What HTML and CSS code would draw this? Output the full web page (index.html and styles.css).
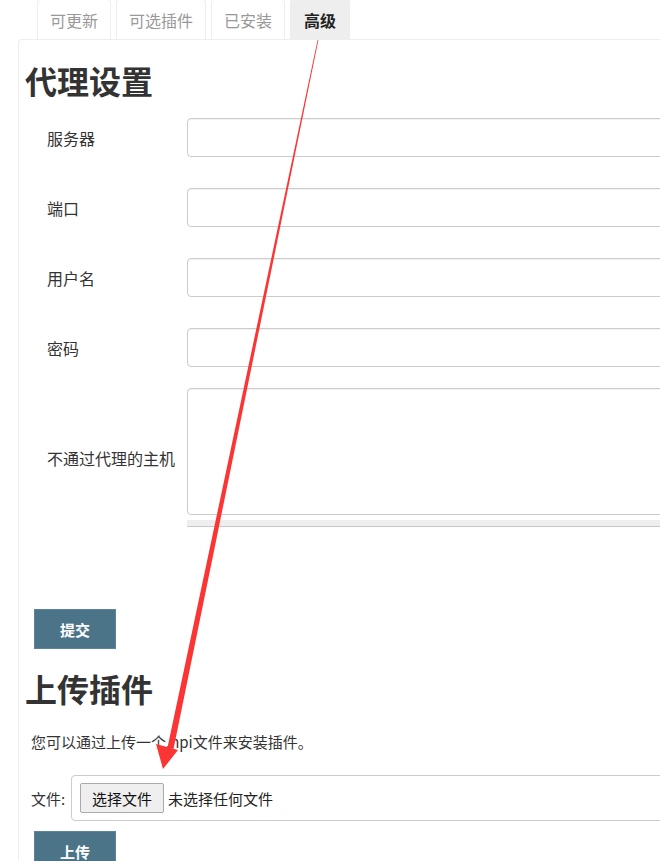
FILE: index.html
```html
<!DOCTYPE html>
<html>

<head>
    <meta charset="UTF-8">
    <title>插件管理</title>
    <link rel="stylesheet" href="styles.css">
</head>

<body>
    <ul class="tabs">
        <li class="tab">可更新</li>
        <li class="tab">可选插件</li>
        <li class="tab">已安装</li>
        <li class="tab active">高级</li>
    </ul>
    <div class="panel">
        <!--代理设置-->
        <h1 class="section-title">代理设置</h1>
        <div class="form">
            <div class="row">
                <label class="label">服务器</label>
                <input class="field" type="text">
            </div>
            <div class="row">
                <label class="label">端口</label>
                <input class="field" type="text">
            </div>
            <div class="row">
                <label class="label">用户名</label>
                <input class="field" type="text">
            </div>
            <div class="row row-last">
                <label class="label">密码</label>
                <input class="field" type="password">
            </div>
            <div class="row row-area">
                <label class="label">不通过代理的主机</label>
                <div class="area-wrap">
                    <textarea class="field area"></textarea>
                    <div class="area-bar"></div>
                </div>
            </div>
        </div>
        <button class="btn-submit">提交</button>

        <!--上传插件-->
        <h1 class="section-title upload-title">上传插件</h1>
        <p class="hint">您可以通过上传一个.hpi文件来安装插件。</p>
        <div class="file-row">
            <span class="file-label">文件:</span>
            <div class="file-box">
                <button class="file-btn">选择文件</button>
                <span class="file-name">未选择任何文件</span>
            </div>
        </div>
        <button class="btn-submit">上传</button>
    </div>

    <!--标注箭头-->
    <svg class="arrow" width="660" height="861" viewBox="0 0 660 861">
        <polygon points="317.6,40 318.4,40 173.5,749 167.5,747.5" fill="#fb3434" />
        <polygon points="156,744 178,750 163,769" fill="#fb3434" />
    </svg>
</body>

</html>
```

FILE: styles.css
```css
html {
    overflow: hidden;
}

body {
    margin: 0;
    font-family: "Noto Sans CJK SC", "Liberation Sans", sans-serif;
    font-size: 16px;
    color: #333;
    background: #fff;
    position: relative;
}

.tabs {
    display: flex;
    gap: 5px;
    margin: 0;
    padding: 0 0 0 37px;
    list-style: none;
    height: 40px;
}

.tab {
    box-sizing: border-box;
    height: 40px;
    line-height: 40px;
    padding: 0 12px;
    border: 1px solid #eee;
    border-bottom: none;
    border-radius: 4px 4px 0 0;
    color: #999;
    font-size: 16px;
    margin-top: -1px;
}

.tab.active {
    background-color: #eee;
    color: #222;
    font-weight: bold;
    padding: 0 13px;
}

.panel {
    margin: -1px 0 0 18px;
    padding: 0 0 0 6px;
    border-top: 1px solid #eee;
    border-left: 1px solid #eee;
    border-radius: 4px 0 0 0;
}

.section-title {
    margin: 0;
    padding: 20px 0 0 0;
    font-size: 32px;
    line-height: 40px;
    font-weight: bold;
    color: #333;
}

.form {
    padding: 18px 0 0 22px;
}

.row {
    display: flex;
    align-items: center;
    margin-bottom: 31px;
}

.row-last {
    margin-bottom: 21px;
}

.label {
    width: 140px;
    flex-shrink: 0;
}

.field {
    box-sizing: border-box;
    width: 520px;
    height: 39px;
    flex-shrink: 0;
    border: 1px solid #ccc;
    border-radius: 4px;
    box-shadow: inset 0 1px 1px rgba(0, 0, 0, 0.06);
    outline: none;
    font-family: inherit;
}

.area-wrap {
    display: flex;
    flex-direction: column;
    gap: 5px;
}

.field.area {
    height: 127px;
    resize: none;
    display: block;
}

.area-bar {
    width: 520px;
    height: 6px;
    background: #eee;
    border-bottom: 1px solid #c8c8c8;
}

.row-area {
    margin-bottom: 0;
}

.btn-submit {
    display: block;
    width: 82px;
    height: 40px;
    margin: 82px 0 0 9px;
    background-color: #4b7489;
    border: 1px solid #5b8499;
    color: #fff;
    font-family: inherit;
    font-size: 15px;
    font-weight: bold;
}

.upload-title {
    padding-top: 19px;
}

.hint {
    margin: 22px 0 0 6px;
    line-height: 24px;
    font-size: 15px;
}

.file-row {
    display: flex;
    align-items: center;
    margin: 21px 0 10px 6px;
}

.file-label {
    width: 40px;
    flex-shrink: 0;
    font-size: 15px;
}

.file-box {
    box-sizing: border-box;
    display: flex;
    align-items: center;
    width: 600px;
    height: 46px;
    flex-shrink: 0;
    padding: 0 8px;
    border: 1px solid #ccc;
    border-radius: 4px;
}

.file-btn {
    box-sizing: border-box;
    height: 30px;
    width: 84px;
    margin-right: 4px;
    background: #efefef;
    border: 1px solid #aaa;
    border-radius: 2px;
    font-family: inherit;
    font-size: 15px;
    color: #111;
}

.file-name {
    color: #222;
    font-size: 15px;
}

.file-row + .btn-submit {
    margin-top: 0;
}

.arrow {
    position: absolute;
    left: 0;
    top: 0;
    pointer-events: none;
}
```
